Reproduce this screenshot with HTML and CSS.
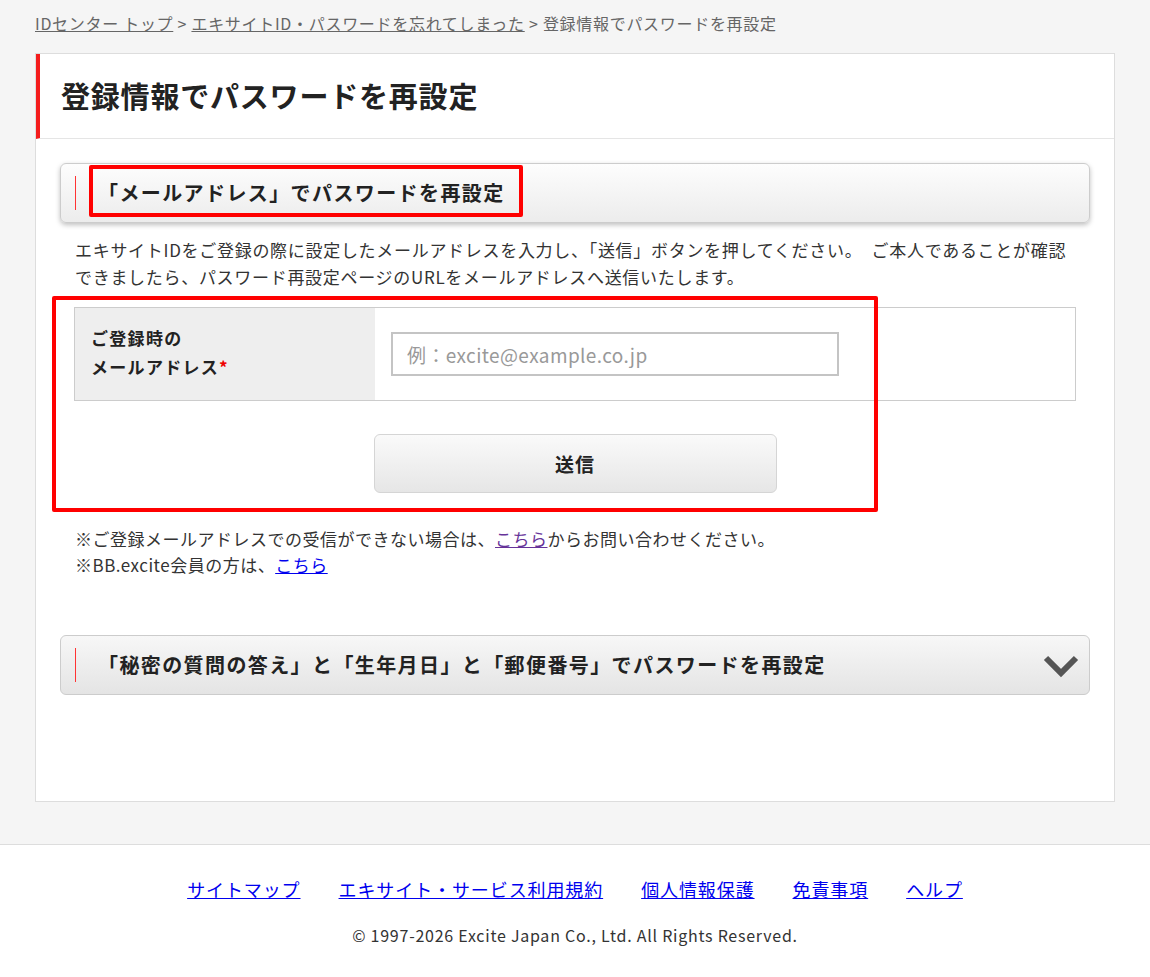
FILE: index.html
```html
<!DOCTYPE html>
<html lang="ja">
<head>
  <meta charset="UTF-8">
  <meta name="viewport" content="width=device-width, initial-scale=1.0">
  <title>登録情報でパスワードを再設定</title>
  <link rel="stylesheet" href="styles.css">
</head>
<body>
  <div class="page">
    <div class="breadcrumb">
      <a href="#">IDセンター トップ</a> &gt;
      <a href="#">エキサイトID・パスワードを忘れてしまった</a> &gt;
      <span>登録情報でパスワードを再設定</span>
    </div>

    <div class="card">
      <h1 class="page-title">登録情報でパスワードを再設定</h1>

      <div class="card-body">
        <div class="acc acc-open">
          <div class="acc-head">
            <span class="acc-title">「メールアドレス」でパスワードを再設定</span>
          </div>
        </div>

        <div class="acc-content">
          <p class="lead">エキサイトIDをご登録の際に設定したメールアドレスを入力し、「送信」ボタンを押してください。　ご本人であることが確認できましたら、パスワード再設定ページのURLをメールアドレスへ送信いたします。</p>

          <form class="mail-form" onsubmit="return false;">
            <div class="form-row">
              <label class="form-label" for="mail">ご登録時の<br>メールアドレス<span class="req">*</span></label>
              <div class="form-field">
                <input type="text" id="mail" placeholder="例：excite@example.co.jp">
              </div>
            </div>
            <div class="form-actions">
              <button type="submit" class="btn">送信</button>
            </div>
          </form>

          <p class="notes">
            ※ご登録メールアドレスでの受信ができない場合は、<a href="#" class="visited">こちら</a>からお問い合わせください。<br>
            ※BB.excite会員の方は、<a href="#">こちら</a>
          </p>
        </div>

        <div class="acc acc-closed">
          <div class="acc-head">
            <span class="acc-title">「秘密の質問の答え」と「生年月日」と「郵便番号」でパスワードを再設定</span>
            <svg class="chevron" width="36" height="24" viewBox="0 0 36 24">
              <polyline points="3,4 18,19 33,4" fill="none" stroke="#555" stroke-width="6"/>
            </svg>
          </div>
        </div>
      </div>

      <!-- annotation boxes -->
      <div class="mark mark-title"></div>
      <div class="mark mark-form"></div>
    </div>
  </div>

  <footer class="footer">
    <ul class="footer-links">
      <li><a href="#">サイトマップ</a></li>
      <li><a href="#">エキサイト・サービス利用規約</a></li>
      <li><a href="#">個人情報保護</a></li>
      <li><a href="#">免責事項</a></li>
      <li><a href="#">ヘルプ</a></li>
    </ul>
    <p class="copyright">&copy; 1997-2026 Excite Japan Co., Ltd. All Rights Reserved.</p>
  </footer>
</body>
</html>
```

FILE: styles.css
```css
body {
  margin: 0;
  font-family: "Noto Sans CJK JP", "Noto Sans", sans-serif;
  color: #333;
  background: #fff;
}

.page {
  background: #f5f5f5;
  padding: 0 0 42px;
}

.breadcrumb {
  width: 1080px;
  margin: 0 auto;
  height: 53px;
  line-height: 46px;
  font-size: 16px;
  letter-spacing: 0.7px;
  color: #666;
}

.breadcrumb a {
  color: #666;
}

.card {
  position: relative;
  width: 1078px;
  margin: 0 auto;
  background: #fff;
  border: 1px solid #ddd;
}

.page-title {
  margin: 0;
  height: 84px;
  line-height: 82px;
  padding-left: 21px;
  border-left: 4px solid #f41c1c;
  border-bottom: 1px solid #e5e5e5;
  font-size: 29px;
  letter-spacing: 0.8px;
  color: #222;
  font-weight: bold;
}

.card-body {
  padding: 24px 24px 106px;
}

.acc {
  border: 1px solid #ccc;
  border-radius: 6px;
  background: linear-gradient(#fdfdfd, #ececec);
}

.acc-open {
  box-shadow: 0 2px 5px rgba(0, 0, 0, 0.25);
}

.acc-closed {
  margin-top: 57px;
  background: linear-gradient(#f7f7f7, #e4e4e4);
}

.acc-head {
  display: flex;
  align-items: center;
  justify-content: space-between;
  height: 58px;
  padding: 0 10px 0 14px;
}

.acc-title {
  border-left: 1px solid #f33;
  padding-left: 22px;
  line-height: 34px;
  font-size: 20px;
  font-weight: bold;
  letter-spacing: 1.4px;
  color: #222;
}

.chevron {
  display: block;
  margin-top: 2px;
}

.acc-content {
  padding: 13px 14px 0;
}

.lead {
  margin: 0 0 0 1px;
  font-size: 17px;
  line-height: 27px;
  letter-spacing: 0.7px;
}

.mail-form {
  margin-top: 17px;
}

.form-row {
  display: flex;
  height: 92px;
  border: 1px solid #ccc;
}

.form-label {
  width: 284px;
  padding: 15px 0 0 16px;
  background: #eee;
  font-size: 17px;
  font-weight: bold;
  line-height: 29px;
  letter-spacing: 1.3px;
  color: #222;
}

.req {
  color: #e00;
}

.form-field {
  display: flex;
  align-items: center;
  padding-left: 16px;
}

.form-field input {
  width: 448px;
  height: 44px;
  box-sizing: border-box;
  border: 2px solid #c4c4c4;
  padding: 0 14px;
  font-family: inherit;
  font-size: 19px;
  letter-spacing: 0.4px;
  color: #333;
}

.form-field input::placeholder {
  color: #999;
}

.form-actions {
  display: flex;
  justify-content: center;
  margin-top: 33px;
}

.btn {
  width: 403px;
  height: 59px;
  border: 1px solid #d5d5d5;
  border-radius: 6px;
  background: linear-gradient(#fafafa, #e6e6e6);
  font-family: inherit;
  font-size: 19px;
  font-weight: bold;
  color: #222;
  letter-spacing: 1px;
}

.notes {
  margin: 33px 0 0 1px;
  font-size: 17px;
  line-height: 26px;
  letter-spacing: 0.5px;
}

.notes a {
  color: #0000ee;
}

.notes a.visited {
  color: #663399;
}

.mark {
  position: absolute;
  border: 4px solid #f00;
  border-radius: 2px;
}

.mark-title {
  left: 53px;
  top: 111px;
  width: 426px;
  height: 44px;
}

.mark-form {
  left: 16px;
  top: 242px;
  width: 818px;
  height: 208px;
}

.footer {
  border-top: 1px solid #ddd;
  padding: 30px 0 28px;
  text-align: center;
}

.footer-links {
  display: flex;
  justify-content: center;
  gap: 38px;
  margin: 0;
  padding: 0;
  list-style: none;
}

.footer-links a {
  font-size: 18px;
  line-height: 28px;
  letter-spacing: 0.9px;
  color: #0000ee;
}

.copyright {
  margin: 20px 0 0;
  font-size: 16px;
  letter-spacing: 0.75px;
  color: #333;
}
```
